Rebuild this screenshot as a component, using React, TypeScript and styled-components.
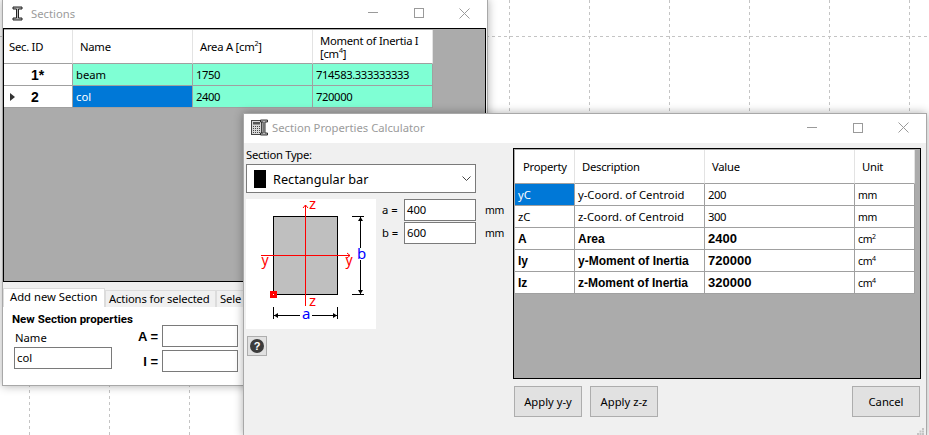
import React from 'react';
import styled, { createGlobalStyle } from 'styled-components';

const GlobalStyle = createGlobalStyle`
  html, body {
    margin: 0;
    padding: 0;
    width: 929px;
    height: 435px;
    overflow: hidden;
    background: #fff;
    font-family: 'Noto Sans', 'Open Sans', sans-serif;
    font-size: 11.25px;
    color: #000;
  }
`;

const Desktop = styled.div`
  position: relative;
  width: 929px;
  height: 435px;
  overflow: hidden;
  background-color: #fff;
`;

const HorizontalLine = styled.div<{ $y: number }>`
  position: absolute;
  left: 0;
  right: 0;
  top: ${({ $y }) => $y}px;
  height: 1px;
  background-image: repeating-linear-gradient(to right, #c4c4c4 0 3px, transparent 3px 6px);
`;

const VerticalLine = styled.div<{ $x: number }>`
  position: absolute;
  top: 0;
  bottom: 0;
  left: ${({ $x }) => $x}px;
  width: 1px;
  background-image: repeating-linear-gradient(to bottom, #c4c4c4 0 3px, transparent 3px 6px);
`;

const Window = styled.div<{ $left: number; $top: number; $width: number; $height: number; $z: number }>`
  position: absolute;
  left: ${({ $left }) => $left}px;
  top: ${({ $top }) => $top}px;
  width: ${({ $width }) => $width}px;
  height: ${({ $height }) => $height}px;
  z-index: ${({ $z }) => $z};
  box-sizing: border-box;
  display: flex;
  flex-direction: column;
  background: #f0f0f0;
  border: 1px solid #a8a8a8;
  box-shadow: 0 0 9px rgba(0, 0, 0, 0.32);
`;

const TitleBar = styled.div<{ $height: number; $pad: number }>`
  flex: none;
  box-sizing: border-box;
  height: ${({ $height }) => $height}px;
  padding: 0 0 2px ${({ $pad }) => $pad}px;
  display: flex;
  align-items: center;
  background: #fff;
`;

const TitleText = styled.span<{ $gap: number }>`
  margin-left: ${({ $gap }) => $gap}px;
  color: #9b9b9b;
  flex: 1;
  white-space: nowrap;
`;

const ControlButton = styled.div`
  width: 45.5px;
  height: 100%;
  display: flex;
  align-items: center;
  justify-content: center;
`;

const WindowControls = () => (
  <>
    <ControlButton>
      <svg width="10" height="10" viewBox="0 0 10 10"><path d="M0 4.5H10" stroke="#9a9a9a" /></svg>
    </ControlButton>
    <ControlButton>
      <svg width="10" height="10" viewBox="0 0 10 10"><rect x="0.5" y="0.5" width="9" height="9" fill="none" stroke="#9a9a9a" /></svg>
    </ControlButton>
    <ControlButton>
      <svg width="11" height="11" viewBox="0 0 11 11"><path d="M0.5 0.5L10.5 10.5M10.5 0.5L0.5 10.5" stroke="#9a9a9a" /></svg>
    </ControlButton>
  </>
);

const BeamIcon = () => (
  <svg width="11" height="15" viewBox="0 0 11 15">
    <path d="M1 1H10V3H6.5V12H10V14H1V12H4.5V3H1Z" fill="#b9b9b9" stroke="#222" strokeWidth="1" />
  </svg>
);

const CalcIcon = () => (
  <svg width="17" height="17" viewBox="0 0 17 17">
    <rect x="0.5" y="1.5" width="10" height="14" fill="#d8d8d8" stroke="#444" />
    <rect x="2" y="3" width="7" height="2.5" fill="#555" />
    <path d="M2 7.5H9M2 9.5H9M2 11.5H9M2 13.5H9" stroke="#444" strokeDasharray="1 1" />
    <path d="M9.5 1H16.5V3H14V14H16.5V16H9.5V14H12V3H9.5Z" fill="#bbb" stroke="#222" strokeWidth="0.9" />
  </svg>
);

const GridFrame = styled.div<{ $padLeft: number }>`
  flex: 1;
  min-height: 0;
  box-sizing: border-box;
  background: #ababab;
  border: 1px solid #000;
  padding: 1px 0 0 ${({ $padLeft }) => $padLeft}px;
`;

const DataGrid = styled.div<{ $columns: string; $rowHead: number; $rows: number }>`
  display: grid;
  grid-template-columns: ${({ $columns }) => $columns};
  grid-template-rows: ${({ $rowHead }) => $rowHead}px repeat(${({ $rows }) => $rows}, 22px);
  width: max-content;
`;

const HeaderCell = styled.div<{ $pad: number }>`
  box-sizing: border-box;
  display: flex;
  align-items: center;
  padding-left: ${({ $pad }) => $pad}px;
  background: #fff;
  border-right: 1px solid #e3e3e3;
  border-bottom: 1px solid #a0a0a0;
  line-height: 13px;
  letter-spacing: -0.25px;
`;

const Cell = styled.div<{ $bg?: string; $bold?: number; $selected?: boolean; $numeric?: boolean }>`
  box-sizing: border-box;
  display: flex;
  align-items: center;
  padding-left: 3px;
  background: ${({ $selected, $bg }) => ($selected ? '#0078d7' : $bg || '#fff')};
  color: ${({ $selected }) => ($selected ? '#fff' : '#000')};
  border-right: 1px solid #a0a0a0;
  border-bottom: 1px solid #a0a0a0;
  white-space: nowrap;
  ${({ $numeric }) => $numeric && 'letter-spacing: -0.4px;'}
  ${({ $bold }) => $bold && `font-family: 'Liberation Sans', Arial, sans-serif; font-weight: 700; font-size: ${$bold}px; letter-spacing: 0;`}
`;

const RowHeader = styled(Cell)`
  position: relative;
  padding-left: 27px;
  font-family: 'Liberation Sans', Arial, sans-serif;
  font-weight: 700;
  font-size: 14px;
`;

const RowMarker = styled.span`
  position: absolute;
  left: 6px;
  top: 7px;
  width: 0;
  height: 0;
  border-top: 4.5px solid transparent;
  border-bottom: 4.5px solid transparent;
  border-left: 5px solid #333;
`;

const Sup = styled.sup`
  font-size: 7px;
  line-height: 0;
`;

const UnitText = styled.span`
  font-size: 10.5px;
  letter-spacing: -0.4px;
`;

const SectionsBody = styled.div`
  flex: 1;
  display: flex;
  flex-direction: column;
  min-height: 0;
`;

const SectionsGridSlot = styled.div`
  height: 254px;
  flex: none;
  display: flex;
  flex-direction: column;
  margin-right: 1px;
`;

const TabStrip = styled.div`
  flex: none;
  margin-top: 6px;
  display: flex;
  align-items: flex-end;
  height: 19px;
`;

const Tab = styled.div<{ $active?: boolean; $width: number }>`
  box-sizing: border-box;
  width: ${({ $width }) => $width}px;
  height: ${({ $active }) => ($active ? 19 : 17)}px;
  padding: 0 0 ${({ $active }) => ($active ? 4 : 2)}px ${({ $active }) => ($active ? 6 : 3)}px;
  display: flex;
  align-items: center;
  background: ${({ $active }) => ($active ? '#fff' : '#f0f0f0')};
  border: 1px solid #dcdcdc;
  border-bottom: none;
  white-space: nowrap;
  letter-spacing: ${({ $active }) => ($active ? 0 : -0.15)}px;
  overflow: hidden;
`;

const TabPanel = styled.div`
  flex: 1;
  display: flex;
  background: #fff;
  padding: 4px 0 0 9px;
`;

const NewSectionColumn = styled.div`
  width: 124px;
  display: flex;
  flex-direction: column;
`;

const GroupTitle = styled.div`
  font-family: Roboto, 'Noto Sans', sans-serif;
  font-weight: 700;
  font-size: 11.5px;
  white-space: nowrap;
  line-height: 16px;
`;

const NameLabel = styled.div`
  margin: 3px 0 0 3px;
  line-height: 16px;
`;

const TextBox = styled.div<{ $width: number; $height: number }>`
  box-sizing: border-box;
  width: ${({ $width }) => $width}px;
  height: ${({ $height }) => $height}px;
  padding: 0 0 2px 2px;
  display: flex;
  align-items: center;
  background: #fff;
  border: 1px solid #7a7a7a;
`;

const NameBox = styled(TextBox)`
  margin: 1px 0 0 2px;
`;

const FormulaColumn = styled.div`
  display: flex;
  flex-direction: column;
  gap: 3px;
  padding-top: 14px;
`;

const FormulaRow = styled.div`
  display: flex;
  align-items: center;
  gap: 4px;
`;

const FormulaLabel = styled.span`
  width: 22px;
  text-align: right;
  font-family: 'Liberation Sans', Arial, sans-serif;
  font-weight: 700;
  font-size: 13px;
`;

const DialogBody = styled.div`
  flex: 1;
  display: flex;
  min-height: 0;
  padding: 4px 5px 0 2px;
`;

const LeftPane = styled.div`
  width: 230px;
  flex: none;
  display: flex;
  flex-direction: column;
`;

const FieldCaption = styled.div`
  line-height: 16px;
  height: 17px;
  letter-spacing: -0.3px;
`;

const Combo = styled.div`
  box-sizing: border-box;
  height: 29px;
  padding: 0 4px 0 7px;
  display: flex;
  align-items: center;
  gap: 7px;
  background: #fff;
  border: 1px solid #7a7a7a;
  font-size: 12.7px;
`;

const Swatch = styled.span`
  width: 12px;
  height: 18px;
  background: #000;
`;

const ComboText = styled.span`
  flex: 1;
`;

const DiagramRow = styled.div`
  margin-top: 6px;
  display: flex;
`;

const DiagramBox = styled.div`
  width: 130px;
  height: 130px;
  flex: none;
  background: #fff;
`;

const DimensionList = styled.div`
  margin-left: 6px;
  display: flex;
  flex-direction: column;
  gap: 1px;
`;

const DimensionRow = styled.div`
  display: flex;
  align-items: center;
  height: 22px;
`;

const DimensionLabel = styled.span`
  width: 22px;
  padding-bottom: 2px;
`;

const UnitLabel = styled(UnitText)`
  margin-left: 9px;
`;

const HelpButton = styled.div`
  box-sizing: border-box;
  width: 20px;
  height: 20px;
  margin: 7px 0 0 1px;
  display: flex;
  align-items: center;
  justify-content: center;
  background: #e1e1e1;
  border: 1px solid #adadad;
`;

const RightPane = styled.div`
  flex: 1;
  margin-left: 37px;
  display: flex;
  flex-direction: column;
  min-width: 0;
`;

const CalcGridSlot = styled.div`
  height: 231px;
  margin-top: 1px;
  flex: none;
  display: flex;
  flex-direction: column;
`;

const ButtonRow = styled.div`
  margin-top: 7px;
  padding: 0 1px;
  display: flex;
  gap: 8px;
`;

const PushButton = styled.div<{ $push?: boolean }>`
  box-sizing: border-box;
  width: 68px;
  height: 31px;
  display: flex;
  align-items: center;
  justify-content: center;
  background: #e1e1e1;
  border: 1px solid #adadad;
  ${({ $push }) => $push && 'margin-left: auto;'}
`;

const SizeGrip = styled.svg`
  position: absolute;
  right: 2px;
  bottom: 0;
`;

const Diagram = () => (
  <svg width="130" height="130" viewBox="0 0 130 130" fontFamily="'Noto Sans', sans-serif" fontSize="15">
    <rect x="27.5" y="17.5" width="64" height="78" fill="#bfbfbf" stroke="#000" />
    <path d="M59.5 6V107M15 56.5H104" stroke="#f00" fill="none" />
    <path d="M57 9L59.5 6L62 9M101 54L104 56.5L101 59" stroke="#f00" fill="none" />
    <text x="63" y="10" fill="#f00">z</text>
    <text x="63" y="107" fill="#f00">z</text>
    <text x="15.5" y="66" fill="#f00" fontSize="14">y</text>
    <text x="99.5" y="66" fill="#f00" fontSize="14">y</text>
    <path d="M106 17.5H118M106 95.5H118M114.5 18V49M114.5 61V95" stroke="#000" fill="none" />
    <path d="M114.5 18L112 22H117ZM114.5 95L112 91H117Z" fill="#000" />
    <text x="111" y="60" fill="#00f">b</text>
    <path d="M27.5 108V120M91.5 108V120M28 116.5H54M66 116.5H91" stroke="#000" fill="none" />
    <path d="M28 116.5L32 114V119ZM91 116.5L87 114V119Z" fill="#000" />
    <text x="56" y="120" fill="#00f">a</text>
    <rect x="24" y="92" width="7" height="7" fill="#f00" />
    <rect x="27" y="95" width="1" height="1" fill="#fff" />
  </svg>
);

const sectionRows = [
  { id: '1*', name: 'beam', area: '1750', inertia: '714583.333333333', current: false },
  { id: '2', name: 'col', area: '2400', inertia: '720000', current: true },
];

const propertyRows = [
  { key: 'yC', label: 'y-Coord. of Centroid', value: '200', unit: <UnitText>mm</UnitText>, bold: false },
  { key: 'zC', label: 'z-Coord. of Centroid', value: '300', unit: <UnitText>mm</UnitText>, bold: false },
  { key: 'A', label: 'Area', value: '2400', unit: <UnitText>cm<Sup>2</Sup></UnitText>, bold: true },
  { key: 'Iy', label: 'y-Moment of Inertia', value: '720000', unit: <UnitText>cm<Sup>4</Sup></UnitText>, bold: true },
  { key: 'Iz', label: 'z-Moment of Inertia', value: '320000', unit: <UnitText>cm<Sup>4</Sup></UnitText>, bold: true },
];

const AQUA = '#7fffd4';

export default function App() {
  return (
    <Desktop>
      <GlobalStyle />
      <HorizontalLine $y={36} />
      {[29, 109, 189, 509, 589, 669, 749, 829, 909].map((x) => (
        <VerticalLine key={x} $x={x} />
      ))}

      <Window $left={2} $top={-1} $width={486} $height={387} $z={1}>
        <TitleBar $height={28} $pad={9}>
          <BeamIcon />
          <TitleText $gap={8}>Sections</TitleText>
          <WindowControls />
        </TitleBar>
        <SectionsBody>
          <SectionsGridSlot>
            <GridFrame $padLeft={0}>
              <DataGrid $columns="69px 120px 120px 120px" $rowHead={34} $rows={2}>
                <HeaderCell $pad={5}>Sec. ID</HeaderCell>
                <HeaderCell $pad={7}>Name</HeaderCell>
                <HeaderCell $pad={7}><span>Area A [cm<Sup>2</Sup>]</span></HeaderCell>
                <HeaderCell $pad={7}>
                  <span>Moment of Inertia I<br />[cm<Sup>4</Sup>]</span>
                </HeaderCell>
                {sectionRows.map((row) => (
                  <React.Fragment key={row.id}>
                    <RowHeader>
                      {row.current && <RowMarker />}
                      {row.id}
                    </RowHeader>
                    <Cell $bg={AQUA} $selected={row.current}>{row.name}</Cell>
                    <Cell $bg={AQUA} $numeric>{row.area}</Cell>
                    <Cell $bg={AQUA} $numeric>{row.inertia}</Cell>
                  </React.Fragment>
                ))}
              </DataGrid>
            </GridFrame>
          </SectionsGridSlot>
          <TabStrip>
            <Tab $active $width={102}>Add new Section</Tab>
            <Tab $width={111}>Actions for selected</Tab>
            <Tab $width={60}>Sele</Tab>
          </TabStrip>
          <TabPanel>
            <NewSectionColumn>
              <GroupTitle>New Section properties</GroupTitle>
              <NameLabel>Name</NameLabel>
              <NameBox $width={98} $height={22}>col</NameBox>
            </NewSectionColumn>
            <FormulaColumn>
              <FormulaRow>
                <FormulaLabel>A =</FormulaLabel>
                <TextBox $width={76} $height={22} />
              </FormulaRow>
              <FormulaRow>
                <FormulaLabel>I =</FormulaLabel>
                <TextBox $width={76} $height={22} />
              </FormulaRow>
            </FormulaColumn>
          </TabPanel>
        </SectionsBody>
      </Window>

      <Window $left={243} $top={113} $width={684} $height={323} $z={2}>
        <TitleBar $height={29} $pad={7}>
          <CalcIcon />
          <TitleText $gap={4}>Section Properties Calculator</TitleText>
          <WindowControls />
        </TitleBar>
        <DialogBody>
          <LeftPane>
            <FieldCaption>Section Type:</FieldCaption>
            <Combo>
              <Swatch />
              <ComboText>Rectangular bar</ComboText>
              <svg width="9" height="5" viewBox="0 0 9 5">
                <path d="M0.5 0.5L4.5 4.5L8.5 0.5" fill="none" stroke="#444" />
              </svg>
            </Combo>
            <DiagramRow>
              <DiagramBox><Diagram /></DiagramBox>
              <DimensionList>
                <DimensionRow>
                  <DimensionLabel>a =</DimensionLabel>
                  <TextBox $width={72} $height={22}>400</TextBox>
                  <UnitLabel>mm</UnitLabel>
                </DimensionRow>
                <DimensionRow>
                  <DimensionLabel>b =</DimensionLabel>
                  <TextBox $width={72} $height={22}>600</TextBox>
                  <UnitLabel>mm</UnitLabel>
                </DimensionRow>
              </DimensionList>
            </DiagramRow>
            <HelpButton>
              <svg width="14" height="14" viewBox="0 0 14 14">
                <circle cx="7" cy="7" r="7" fill="#3c3c3c" />
                <text x="7" y="11" textAnchor="middle" fill="#fff" fontSize="11" fontWeight="700" fontFamily="'Liberation Sans', sans-serif">?</text>
              </svg>
            </HelpButton>
          </LeftPane>
          <RightPane>
            <CalcGridSlot>
              <GridFrame $padLeft={1}>
                <DataGrid $columns="60px 130px 150px 60px" $rowHead={34} $rows={5}>
                  <HeaderCell $pad={8}>Property</HeaderCell>
                  <HeaderCell $pad={7}>Description</HeaderCell>
                  <HeaderCell $pad={7}>Value</HeaderCell>
                  <HeaderCell $pad={7}>Unit</HeaderCell>
                  {propertyRows.map((row, i) => (
                    <React.Fragment key={row.key}>
                      <Cell $selected={i === 0} $bold={row.bold ? 12 : undefined}>{row.key}</Cell>
                      <Cell $bold={row.bold ? 12 : undefined}>{row.label}</Cell>
                      <Cell $numeric $bold={row.bold ? 13 : undefined}>{row.value}</Cell>
                      <Cell>{row.unit}</Cell>
                    </React.Fragment>
                  ))}
                </DataGrid>
              </GridFrame>
            </CalcGridSlot>
            <ButtonRow>
              <PushButton>Apply y-y</PushButton>
              <PushButton>Apply z-z</PushButton>
              <PushButton $push>Cancel</PushButton>
            </ButtonRow>
          </RightPane>
        </DialogBody>
        <SizeGrip width="7" height="7" viewBox="0 0 7 7">
          <path d="M5 0h2v2H5zM2.5 2.5h2v2h-2zM5 2.5h2v2H5zM0 5h2v2H0zM2.5 5h2v2h-2zM5 5h2v2H5z" fill="#c4c4c4" />
        </SizeGrip>
      </Window>
    </Desktop>
  );
}
